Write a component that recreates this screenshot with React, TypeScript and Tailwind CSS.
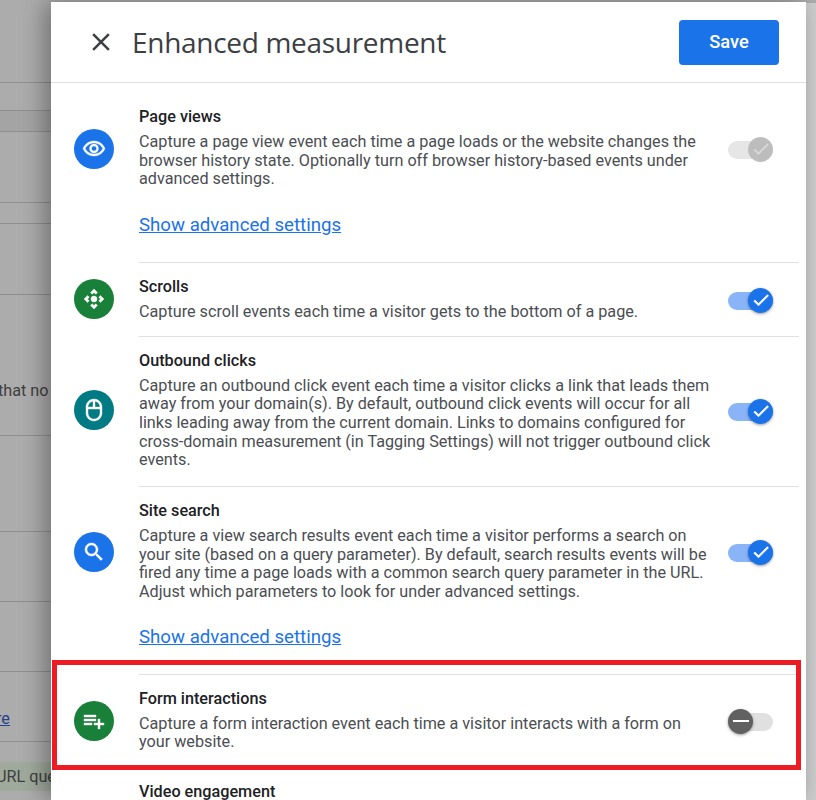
import React from 'react';

const EYE = 'M12 6c3.79 0 7.17 2.13 8.82 5.5C19.17 14.87 15.79 17 12 17s-7.17-2.13-8.82-5.5C4.83 8.13 8.21 6 12 6m0-2C7 4 2.73 7.11 1 11.5 2.73 15.89 7 19 12 19s9.27-3.11 11-7.5C21.27 7.11 17 4 12 4zm0 5c1.38 0 2.5 1.12 2.5 2.5S13.38 14 12 14s-2.5-1.12-2.5-2.5S10.62 9 12 9m0-2c-2.48 0-4.5 2.02-4.5 4.5S9.52 16 12 16s4.5-2.02 4.5-4.5S14.48 7 12 7z';
const MOVE = 'M15.54 5.54L13.77 7.3 12 5.54 10.23 7.3 8.46 5.54 12 2l3.54 3.54zm2.92 10l-1.76-1.77L18.46 12l-1.76-1.77 1.76-1.77L22 12l-3.54 3.54zm-10 2.92l1.77-1.76L12 18.46l1.77-1.76 1.77 1.76L12 22l-3.54-3.54zm-2.92-10l1.76 1.77L5.54 12l1.76 1.77-1.76 1.77L2 12l3.54-3.54zM12 9a3 3 0 1 0 0 6 3 3 0 0 0 0-6z';
const MOUSE = 'M20 9c-.04-4.39-3.6-7.93-8-7.93S4.04 4.61 4 9v6c0 4.42 3.58 8 8 8s8-3.58 8-8V9zm-2 0h-5V3.16c2.81.47 4.96 2.9 5 5.84zm-7-5.84V9H6c.04-2.94 2.19-5.37 5-5.84zM18 15c0 3.31-2.69 6-6 6s-6-2.69-6-6v-4h12v4z';
const SEARCH = 'M15.5 14h-.79l-.28-.27C15.41 12.59 16 11.11 16 9.5 16 5.91 13.09 3 9.5 3S3 5.91 3 9.5 5.91 16 9.5 16c1.61 0 3.09-.59 4.23-1.57l.27.28v.79l5 4.99L20.49 19l-4.99-5zm-6 0C7.01 14 5 11.99 5 9.5S7.01 5 9.5 5 14 7.01 14 9.5 11.99 14 9.5 14z';
const FORM = 'M14 10H2v2h12v-2zm0-4H2v2h12V6zm4 8v-4h-2v4h-4v2h4v4h2v-4h4v-2h-4zM2 16h8v-2H2v2z';

const Icon: React.FC<{ d: string; className: string }> = ({ d, className }) => (
  <div className={`w-10 h-10 rounded-full flex items-center justify-center shrink-0 ${className}`}>
    <svg viewBox="0 0 24 24" width="24" height="24" fill="white" stroke="white" strokeWidth="0.4">
      <path d={d} />
    </svg>
  </div>
);

const Toggle: React.FC<{ state: 'on' | 'off' | 'disabled' }> = ({ state }) => {
  if (state === 'off') {
    return (
      <div className="relative w-[45px] h-[18px] rounded-full bg-[#e0e0e0] shrink-0">
        <div className="absolute left-0 top-[-4px] w-[25px] h-[25px] rounded-full bg-[#616161] shadow-[0_1px_3px_rgba(0,0,0,0.4)] flex items-center justify-center">
          <div className="w-[16px] h-[2px] bg-white" />
        </div>
      </div>
    );
  }
  const disabled = state === 'disabled';
  return (
    <div className={`relative w-[45px] h-[18px] rounded-full shrink-0 ${disabled ? 'bg-[#e6e6e6]' : 'bg-[#8ab4f8]'}`}>
      <div className={`absolute right-0 top-[-4px] w-[25px] h-[25px] rounded-full flex items-center justify-center ${disabled ? 'bg-[#bdbdbd]' : 'bg-[#1a73e8] shadow-[0_1px_3px_rgba(0,0,0,0.4)]'}`}>
        <svg viewBox="0 0 24 24" width="20" height="20" fill={disabled ? '#d6d6d6' : 'white'} stroke={disabled ? '#d6d6d6' : 'white'} strokeWidth="0.8">
          <path d="M9 16.2L4.8 12l-1.4 1.4L9 19 21 7l-1.4-1.4z" />
        </svg>
      </div>
    </div>
  );
};

const Row: React.FC<{
  icon: React.ReactNode;
  title: string;
  text: string;
  toggle: 'on' | 'off' | 'disabled';
  link?: string;
  className?: string;
  iconClassName?: string;
}> = ({ icon, title, text, toggle, link, className, iconClassName }) => (
  <div className={className}>
    <div className="flex items-center">
      <div className={`w-[88px] pl-[23px] shrink-0 ${iconClassName ?? ''}`}>{icon}</div>
      <div className="w-[577px] shrink-0">
        <div className="text-[16.22px] leading-[19px] font-medium text-[#202124] mb-[7px]">{title}</div>
        <div className="text-[16.22px] leading-[18.67px] text-[#4b4e52]">{text}</div>
      </div>
      <div className="ml-[12px] mt-[3px]">
        <Toggle state={toggle} />
      </div>
    </div>
    {link && (
      <div className={`ml-[88px] text-[18.67px] leading-[22px] text-[#1a73e8] underline ${link}`}>
        Show advanced settings
      </div>
    )}
  </div>
);

export default function App() {
  return (
    <div className="w-[816px] h-[800px] overflow-hidden relative flex bg-[#acacac] font-['Roboto',sans-serif]">
      {/* dimmed page behind the drawer */}
      <div className="w-[51px] shrink-0 flex flex-col text-[16.2px] text-[#3f3f3f] whitespace-nowrap pt-[2px]">
        <div className="h-[81px] shrink-0 border-b border-[#8f8f8f]" />
        <div className="h-[28px] shrink-0 border-b border-[#8f8f8f]" />
        <div className="h-[21px] shrink-0 border-b border-[#8f8f8f] bg-[#a4a4a4]" />
        <div className="h-[71px] shrink-0 border-b border-[#8f8f8f]" />
        <div className="h-[21px] shrink-0 border-b border-[#8f8f8f]" />
        <div className="h-[71px] shrink-0 border-b border-[#8f8f8f]" />
        <div className="h-[141px] shrink-0 border-b border-[#8f8f8f] pt-[84px]">
          <span className="-ml-[2px]">that no</span>
        </div>
        <div className="h-[96px] shrink-0 border-b border-[#8f8f8f]" />
        <div className="h-[70px] shrink-0 border-b border-[#8f8f8f]" />
        <div className="h-[70px] shrink-0 border-b border-[#8f8f8f]" />
        <div className="h-[70px] shrink-0 border-b border-[#8f8f8f] pt-[35px]">
          <span className="-ml-[4px] text-[#24408f] underline">re</span>
        </div>
        <div className="mt-[20px] h-[29px] shrink-0 bg-[#9fa99c] flex items-center pt-[2px]">
          <span className="-ml-[4px]">URL quer</span>
        </div>
      </div>

      {/* drawer */}
      <div className="w-[755px] shrink-0 mt-[2px] bg-white flex flex-col relative z-10 shadow-[-6px_0_22px_rgba(0,0,0,0.35)]">
        <div className="h-[81px] shrink-0 border-b border-[#e0e0e0] flex items-center pl-[35px] pr-[27px]">
          <svg viewBox="0 0 24 24" width="30" height="30" fill="#3c4043" className="shrink-0">
            <path d="M19 6.41L17.59 5 12 10.59 6.41 5 5 6.41 10.59 12 5 17.59 6.41 19 12 13.41 17.59 19 19 17.59 13.41 12z" />
          </svg>
          <div className="ml-[16px] text-[28px] text-[#3c4043] font-['Open_Sans',sans-serif] tracking-[-0.3px]">
            Enhanced measurement
          </div>
          <button className="ml-auto w-[100px] h-[45px] rounded-[4px] bg-[#1a73e8] text-white text-[18.3px] font-medium">
            Save
          </button>
        </div>

        <div className="pr-[7px]">
          <Row
            className="pt-[24px] pb-[26px]"
            iconClassName="mt-[2px]"
            icon={<Icon d={EYE} className="bg-[#1a73e8]" />}
            title="Page views"
            text="Capture a page view event each time a page loads or the website changes the browser history state. Optionally turn off browser history-based events under advanced settings."
            toggle="disabled"
            link="mt-[25px]"
          />
          <div className="ml-[88px] h-px bg-[#e0e0e0]" />
          <Row
            className="py-[14px]"
            icon={<Icon d={MOVE} className="bg-[#188038]" />}
            title="Scrolls"
            text="Capture scroll events each time a visitor gets to the bottom of a page."
            toggle="on"
          />
          <div className="ml-[88px] h-px bg-[#e0e0e0]" />
          <Row
            className="pt-[14px] pb-[16px]"
            icon={<Icon d={MOUSE} className="bg-[#007b83]" />}
            title="Outbound clicks"
            text="Capture an outbound click event each time a visitor clicks a link that leads them away from your domain(s). By default, outbound click events will occur for all links leading away from the current domain. Links to domains configured for cross-domain measurement (in Tagging Settings) will not trigger outbound click events."
            toggle="on"
          />
          <div className="ml-[88px] h-px bg-[#e0e0e0]" />
          <Row
            className="pt-[14px] pb-[25px]"
            iconClassName="mt-[2px]"
            icon={<Icon d={SEARCH} className="bg-[#1a73e8]" />}
            title="Site search"
            text="Capture a view search results event each time a visitor performs a search on your site (based on a query parameter). By default, search results events will be fired any time a page loads with a common search query parameter in the URL. Adjust which parameters to look for under advanced settings."
            toggle="on"
            link="mt-[24px] mb-[1px]"
          />
          <div className="ml-[88px] h-px bg-[#e0e0e0]" />
          <Row
            className="py-[14px]"
            iconClassName="mt-[2px]"
            icon={<Icon d={FORM} className="bg-[#188038]" />}
            title="Form interactions"
            text="Capture a form interaction event each time a visitor interacts with a form on your website."
            toggle="off"
          />
          <div className="ml-[88px] mt-[16px] text-[16.22px] leading-[19px] font-medium text-[#202124]">
            Video engagement
          </div>
        </div>
      </div>

      {/* scrollbar */}
      <div className="w-[10px] shrink-0 mt-[3px] bg-[#cdcdcd]" />

      {/* red annotation drawn over the screenshot */}
      <div className="absolute left-[52px] top-[660px] w-[749px] h-[110px] border-[5px] border-[#ed1c24] z-20" />
    </div>
  );
}
